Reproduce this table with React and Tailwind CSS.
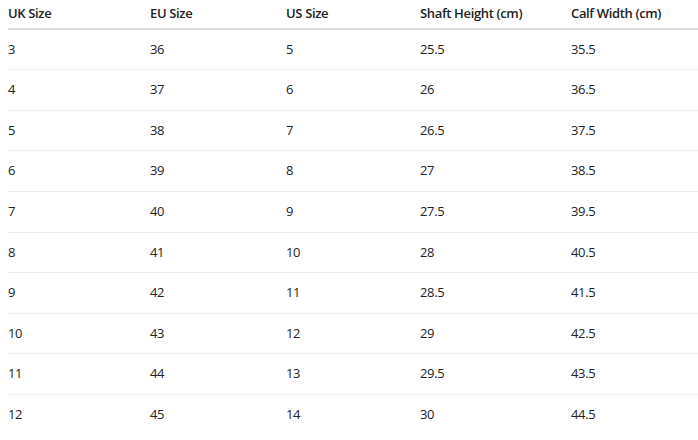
import React from "react";

const ROWS = [
  ["3", "36", "5", "25.5", "35.5"],
  ["4", "37", "6", "26", "36.5"],
  ["5", "38", "7", "26.5", "37.5"],
  ["6", "39", "8", "27", "38.5"],
  ["7", "40", "9", "27.5", "39.5"],
  ["8", "41", "10", "28", "40.5"],
  ["9", "42", "11", "28.5", "41.5"],
  ["10", "43", "12", "29", "42.5"],
  ["11", "44", "13", "29.5", "43.5"],
  ["12", "45", "14", "30", "44.5"],
];

const HEADERS = ["UK Size", "EU Size", "US Size", "Shaft Height (cm)", "Calf Width (cm)"];
const WIDTHS = ["w-[142px]", "w-[136px]", "w-[134px]", "w-[151px]", "w-auto"];

export default function App() {
  return (
    <div className="bg-white h-[440px] overflow-hidden pl-2 font-['Segoe_UI','Open_Sans',sans-serif] text-[13px] leading-[1.2] tracking-[-0.35px] text-[#222]">
      <table className="w-[690px] table-fixed border-collapse text-left">
        <thead>
          <tr className="border-b-2 border-[#dddddd]">
            {HEADERS.map((h, i) => (
              <th key={h} className={`${WIDTHS[i]} pt-1.5 pb-1.5 pr-2 font-semibold`}>
                {h}
              </th>
            ))}
          </tr>
        </thead>
        <tbody>
          {ROWS.map((row) => (
            <tr key={row[0]} className="border-b border-[#eeeeee] last:border-0">
              {row.map((v, i) => (
                <td key={i} className="py-3 pr-2 font-normal">
                  {v}
                </td>
              ))}
            </tr>
          ))}
        </tbody>
      </table>
    </div>
  );
}
